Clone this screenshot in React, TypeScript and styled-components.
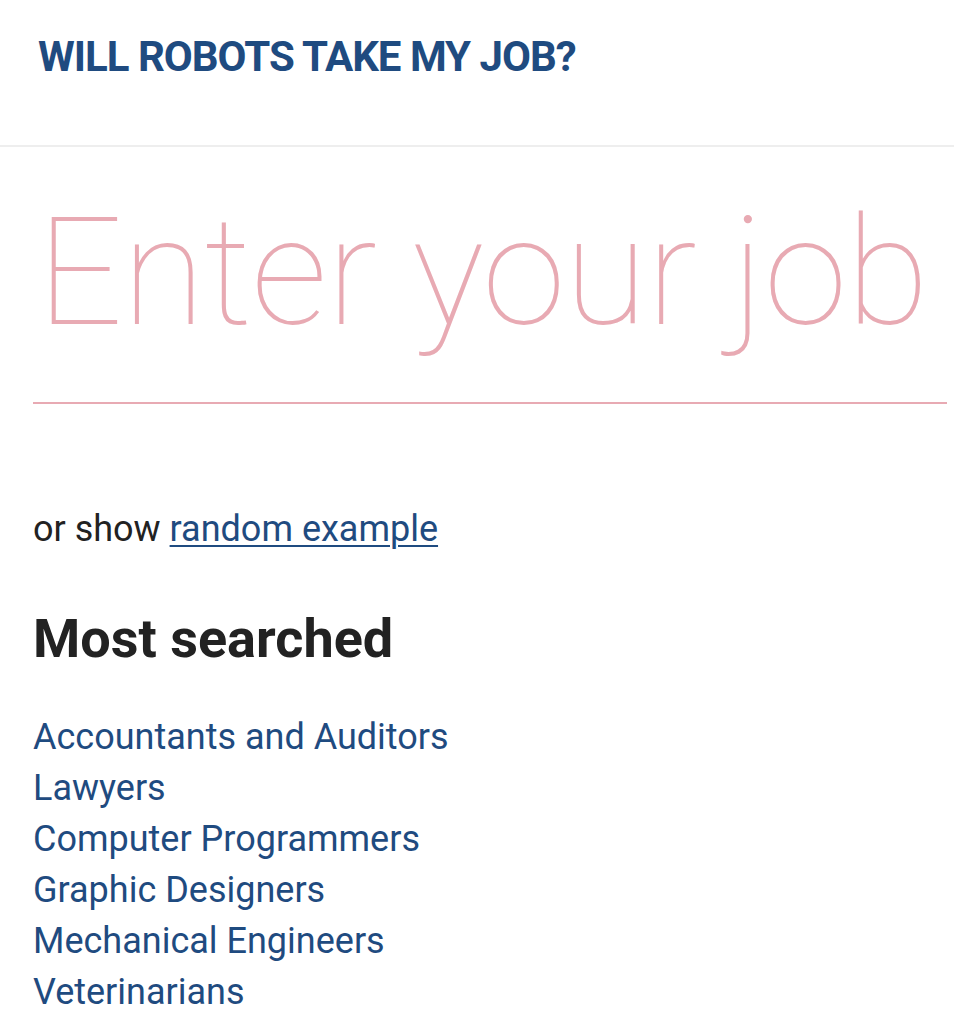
import React, { useState } from "react";
import styled, { createGlobalStyle } from "styled-components";

const GlobalStyle = createGlobalStyle`
  html, body {
    margin: 0;
    padding: 0;
    background: #fff;
  }
  body {
    font-family: Roboto, "Liberation Sans", Arial, sans-serif;
    color: #222;
  }
  * {
    box-sizing: border-box;
  }
`;

const Page = styled.div`
  width: 100%;
  overflow: hidden;
`;

const Header = styled.header`
  height: 147px;
  padding: 36px 38px 0;
  border-bottom: 2px solid #eeeeee;
`;

const Logo = styled.a`
  display: block;
  font-size: 42px;
  line-height: 1;
  font-weight: 700;
  color: #1f4b80;
  text-decoration: none;
  letter-spacing: -1px;
`;

const Main = styled.main`
  padding: 0 7px 0 33px;
`;

const SearchBox = styled.div`
  margin-top: 40px;
  border-bottom: 2px solid #e8aab3;
`;

const JobInput = styled.input`
  display: block;
  width: 100%;
  border: none;
  outline: none;
  background: transparent;
  padding: 0 0 44px 4px;
  height: 215px;
  font-family: Roboto, "Liberation Sans", sans-serif;
  font-weight: 100;
  font-size: 151px;
  letter-spacing: -0.7px;
  color: #e8aab3;

  &::placeholder {
    color: #e8aab3;
    opacity: 1;
  }
`;

const Random = styled.p`
  margin: 107px 0 0;
  font-size: 36px;
  line-height: 1;
  color: #222;
`;

const Link = styled.a`
  color: #1f4b80;
  text-decoration: underline;
  text-decoration-thickness: 2px;
  text-underline-offset: 4px;
`;

const Heading = styled.h2`
  margin: 65px 0 0;
  font-size: 54px;
  font-weight: 700;
  line-height: 1;
  color: #222;
`;

const JobList = styled.ul`
  list-style: none;
  margin: 46px 0 0;
  padding: 0;
`;

const JobItem = styled.li`
  font-size: 36px;
  line-height: 51px;
`;

const JobLink = styled.a`
  color: #1f4b80;
  text-decoration: none;
`;

const jobs = [
  "Accountants and Auditors",
  "Lawyers",
  "Computer Programmers",
  "Graphic Designers",
  "Mechanical Engineers",
  "Veterinarians",
];

export default function App() {
  const [job, setJob] = useState("");
  return (
    <Page>
      <GlobalStyle />
      <Header>
        <Logo href="#">WILL ROBOTS TAKE MY JOB?</Logo>
      </Header>
      <Main>
        <SearchBox>
          <JobInput
            placeholder="Enter your job"
            value={job}
            onChange={(e) => setJob(e.target.value)}
          />
        </SearchBox>
        <Random>
          or show <Link href="#">random example</Link>
        </Random>
        <Heading>Most searched</Heading>
        <JobList>
          {jobs.map((j) => (
            <JobItem key={j}>
              <JobLink href="#">{j}</JobLink>
            </JobItem>
          ))}
        </JobList>
      </Main>
    </Page>
  );
}
